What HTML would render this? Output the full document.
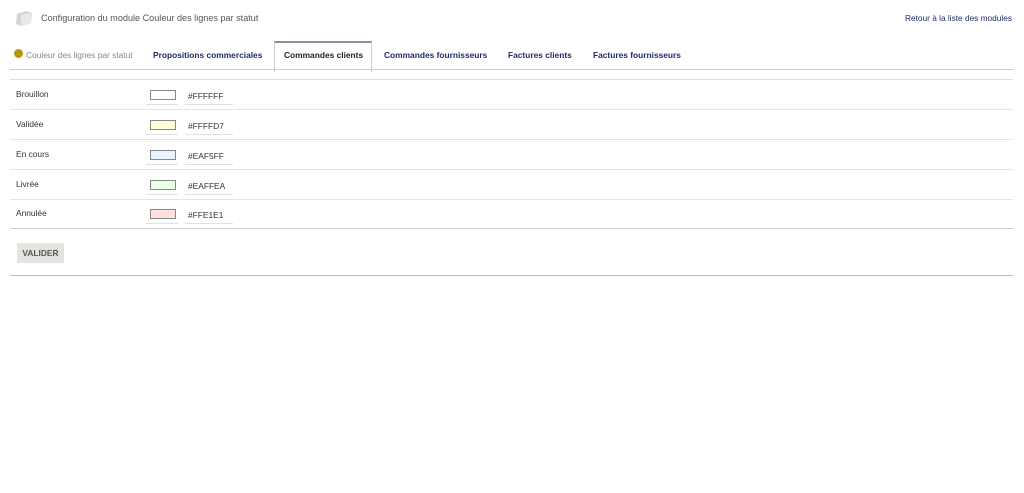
<!DOCTYPE html>
<html><head><meta charset="utf-8"><style>
body{margin:0;background:#fff;font-family:"Liberation Sans",sans-serif;font-size:8.4px;color:#333;width:1024px;height:493px;position:relative;overflow:hidden}
.a{position:absolute}
.tab{position:absolute;top:50px;font-weight:bold;color:#222a6a;font-size:8.4px}
.hl{position:absolute;left:10px;width:1003px;height:1px;background:#ccc}
.lab{position:absolute;left:16px;font-size:8.4px;color:#333}
.sw{position:absolute;left:150px;width:24px;height:8px;border:1px solid #888}
.u1{position:absolute;left:146px;width:32px;height:1px;background:#e0e0e0}
.tx{position:absolute;left:188px;font-size:8.4px;color:#333}
.u2{position:absolute;left:185px;width:48px;height:1px;background:#e0e0e0}
</style></head><body>
<svg class="a" style="left:14px;top:9px" width="20" height="18" viewBox="0 0 20 18"><path d="M3 5 L12 2 L18 4 L17 14 L7 17 L2 15 Z" fill="#d4d4d4"/><path d="M7 6 L17 4 L17 14 L7 17 Z" fill="#e8e8e8"/></svg>
<div class="a" style="left:41px;top:13px;font-size:9.1px;color:#555">Configuration du module Couleur des lignes par statut</div>
<div class="a" style="right:12px;top:13px;font-size:8.3px;color:#222a6a">Retour à la liste des modules</div>
<div class="a" style="left:14px;top:49px;width:9px;height:9px;border-radius:50%;background:#b8960c"></div>
<div class="a" style="left:26px;top:50px;color:#888;font-size:8.4px">Couleur des lignes par statut</div>
<div class="tab" style="left:153px">Propositions commerciales</div>
<div class="a" style="left:274px;top:41px;width:96px;height:29px;border:1px solid #ccc;border-top:2px solid #8a8fa0;border-bottom:none;background:#fff"></div>
<div class="tab" style="left:284px;color:#222">Commandes clients</div>
<div class="tab" style="left:384px">Commandes fournisseurs</div>
<div class="tab" style="left:508px">Factures clients</div>
<div class="tab" style="left:593px">Factures fournisseurs</div>
<div class="hl" style="top:69px"></div>
<div class="hl" style="top:79px;background:#ddd"></div>
<div class="lab" style="top:89px">Brouillon</div><div class="sw" style="top:90px;background:#fff"></div><div class="u1" style="top:104px"></div><div class="tx" style="top:91px">#FFFFFF</div><div class="u2" style="top:104px"></div>
<div class="hl" style="top:109px;background:#e4e4e4"></div>
<div class="lab" style="top:119px">Validée</div><div class="sw" style="top:120px;background:#FFFFD7"></div><div class="u1" style="top:134px"></div><div class="tx" style="top:121px">#FFFFD7</div><div class="u2" style="top:134px"></div>
<div class="hl" style="top:139px;background:#e4e4e4"></div>
<div class="lab" style="top:149px">En cours</div><div class="sw" style="top:150px;background:#EAF5FF"></div><div class="u1" style="top:164px"></div><div class="tx" style="top:151px">#EAF5FF</div><div class="u2" style="top:164px"></div>
<div class="hl" style="top:169px;background:#e4e4e4"></div>
<div class="lab" style="top:179px">Livrée</div><div class="sw" style="top:180px;background:#EAFFEA"></div><div class="u1" style="top:194px"></div><div class="tx" style="top:181px">#EAFFEA</div><div class="u2" style="top:194px"></div>
<div class="hl" style="top:199px;background:#e4e4e4"></div>
<div class="lab" style="top:208px">Annulée</div><div class="sw" style="top:209px;background:#FFE1E1"></div><div class="u1" style="top:223px"></div><div class="tx" style="top:210px">#FFE1E1</div><div class="u2" style="top:223px"></div>
<div class="hl" style="top:228px"></div>
<div class="a" style="left:17px;top:243px;width:47px;height:20px;background:#e1e4df;color:#555;font-weight:bold;font-size:8.4px;line-height:20px;text-align:center">VALIDER</div>
<div class="hl" style="top:275px;background:#bbb"></div>
</body></html>
